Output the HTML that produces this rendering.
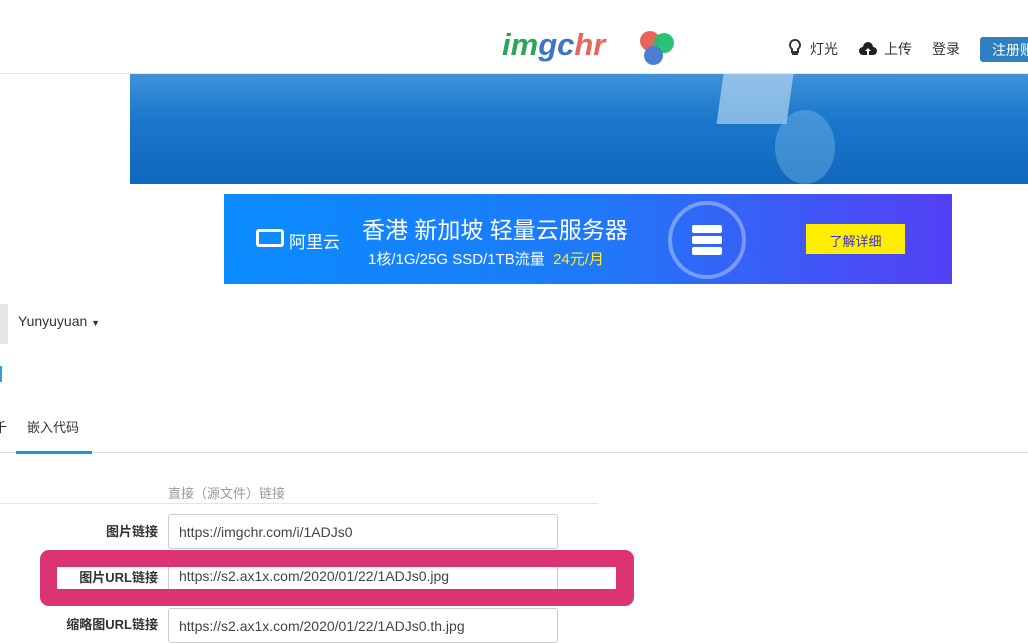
<!DOCTYPE html>
<html><head><meta charset="utf-8"><style>
*{margin:0;padding:0;box-sizing:border-box}
body{width:1028px;height:625px;overflow:hidden;background:#fff;font-family:"Liberation Sans","Noto Sans CJK SC",sans-serif;position:relative;color:#333;font-size:13px}
.a{position:absolute}
.inp{position:absolute;left:168px;width:390px;height:35px;border:1px solid #ccc;border-radius:3px;background:#fff;padding:9px 10px;font-size:14px;color:#444}
.lbl{position:absolute;width:158px;text-align:right;left:0;font-weight:bold;font-size:13px;color:#333}
</style></head><body>
<div class="a" style="left:0;top:0;width:1028px;height:74px;border-bottom:1px solid #e5e5e5;background:#fff"></div>
<div class="a" style="left:502px;top:27px;font:italic bold 31px 'Liberation Sans',sans-serif;letter-spacing:0px"><span style="color:#2aa657">im</span><span style="color:#3d75cc">gc</span><span style="color:#e8655a">hr</span></div>
<div class="a" style="left:640px;top:31px;width:20px;height:20px;border-radius:50%;background:#e8655a"></div>
<div class="a" style="left:654px;top:33px;width:20px;height:20px;border-radius:50%;background:#20c070;opacity:.95"></div>
<div class="a" style="left:644px;top:46px;width:19px;height:19px;border-radius:50%;background:#4a7ed0"></div>
<svg class="a" style="left:787px;top:38px" width="16" height="19" viewBox="0 0 16 19"><path d="M8 2a5 5 0 0 0-3 9v3h6v-3a5 5 0 0 0-3-9z" fill="none" stroke="#333" stroke-width="2"/><rect x="5" y="15" width="6" height="2" fill="#333"/></svg>
<div class="a" style="left:810px;top:39px;font-size:14px">灯光</div>
<svg class="a" style="left:858px;top:40px" width="20" height="16" viewBox="0 0 20 16"><path d="M5 15a4 4 0 0 1 0-8 5 5 0 0 1 10 0 4 4 0 0 1 0 8z" fill="#222"/><path d="M10 8l-3 3h2v4h2v-4h2z" fill="#fff"/></svg>
<div class="a" style="left:884px;top:39px;font-size:14px">上传</div>
<div class="a" style="left:932px;top:39px;font-size:14px">登录</div>
<div class="a" style="left:980px;top:37px;width:60px;height:25px;background:#2f7fc1;border-radius:3px;color:#fff;font-size:14px;padding:3px 0 0 12px">注册账</div>
<div class="a" style="left:130px;top:74px;width:898px;height:110px;background:linear-gradient(180deg,#3f92d8 0%,#1b78cc 40%,#0f67be 100%)"></div>
<div class="a" style="left:720px;top:74px;width:70px;height:50px;background:rgba(200,225,245,.6);transform:skewX(-8deg)"></div>
<div class="a" style="left:775px;top:110px;width:60px;height:74px;border-radius:50%;background:rgba(140,200,240,.35)"></div>
<div class="a" style="left:224px;top:194px;width:728px;height:90px;background:linear-gradient(90deg,#0a8cff 0%,#1e7af8 50%,#5540f5 100%)"></div>
<div class="a" style="left:256px;top:229px;width:28px;height:18px;border:3px solid #fff;border-radius:3px"></div>
<div class="a" style="left:289px;top:228px;color:#fff;font-size:17px">阿里云</div>
<div class="a" style="left:362px;top:211px;color:#fff;font-size:23px">香港 新加坡 轻量云服务器</div>
<div class="a" style="left:368px;top:248px;color:#fff;font-size:15px">1核/1G/25G SSD/1TB流量 <span style="color:#ffee33">&nbsp;24元/月</span></div>
<div class="a" style="left:668px;top:201px;width:78px;height:78px;border-radius:50%;border:4px solid rgba(255,255,255,.35)"></div>
<div class="a" style="left:692px;top:225px;width:30px;height:8px;background:#fff;border-radius:2px"></div>
<div class="a" style="left:692px;top:236px;width:30px;height:8px;background:#fff;border-radius:2px"></div>
<div class="a" style="left:692px;top:247px;width:30px;height:8px;background:#fff;border-radius:2px"></div>
<div class="a" style="left:806px;top:224px;width:99px;height:30px;background:#ffee00;color:#3a2fd0;font-size:13px;text-align:center;padding-top:7px">了解详细</div>
<div class="a" style="left:0;top:304px;width:8px;height:40px;background:#e5e5e5"></div>
<div class="a" style="left:18px;top:313px;font-size:14px;color:#333">Yunyuyuan <span style="font-size:9px">▼</span></div>
<div class="a" style="left:0;top:366px;width:2px;height:16px;background:#2a9fd8"></div>
<div class="a" style="left:-6px;top:417px;font-size:13px">千</div>
<div class="a" style="left:27px;top:417px;font-size:13px">嵌入代码</div>
<div class="a" style="left:0;top:452px;width:1028px;height:1px;background:#ddd"></div>
<div class="a" style="left:16px;top:451px;width:76px;height:3px;background:#1a9bd6"></div>
<div class="a" style="left:168px;top:483px;font-size:13px;color:#999">直接（源文件）链接</div>
<div class="a" style="left:0;top:503px;width:598px;height:1px;background:#e5e5e5"></div>
<div class="lbl" style="top:521px">图片链接</div>
<div class="inp" style="top:514px">https://imgchr.com/i/1ADJs0</div>
<div class="a" style="left:40px;top:550px;width:594px;height:56px;background:#dc3473;border-radius:9px"></div>
<div class="a" style="left:57px;top:567px;width:559px;height:22px;background:#fff"></div>
<div class="a" style="left:168px;top:567px;width:1px;height:22px;background:#ccc"></div>
<div class="a" style="left:557px;top:567px;width:1px;height:22px;background:#ccc"></div>
<div class="lbl" style="top:567px">图片URL链接</div>
<div class="a" style="left:179px;top:568px;font-size:14px;color:#444">https://s2.ax1x.com/2020/01/22/1ADJs0.jpg</div>
<div class="inp" style="top:608px">https://s2.ax1x.com/2020/01/22/1ADJs0.th.jpg</div>
<div class="lbl" style="top:614px">缩略图URL链接</div>
</body></html>
